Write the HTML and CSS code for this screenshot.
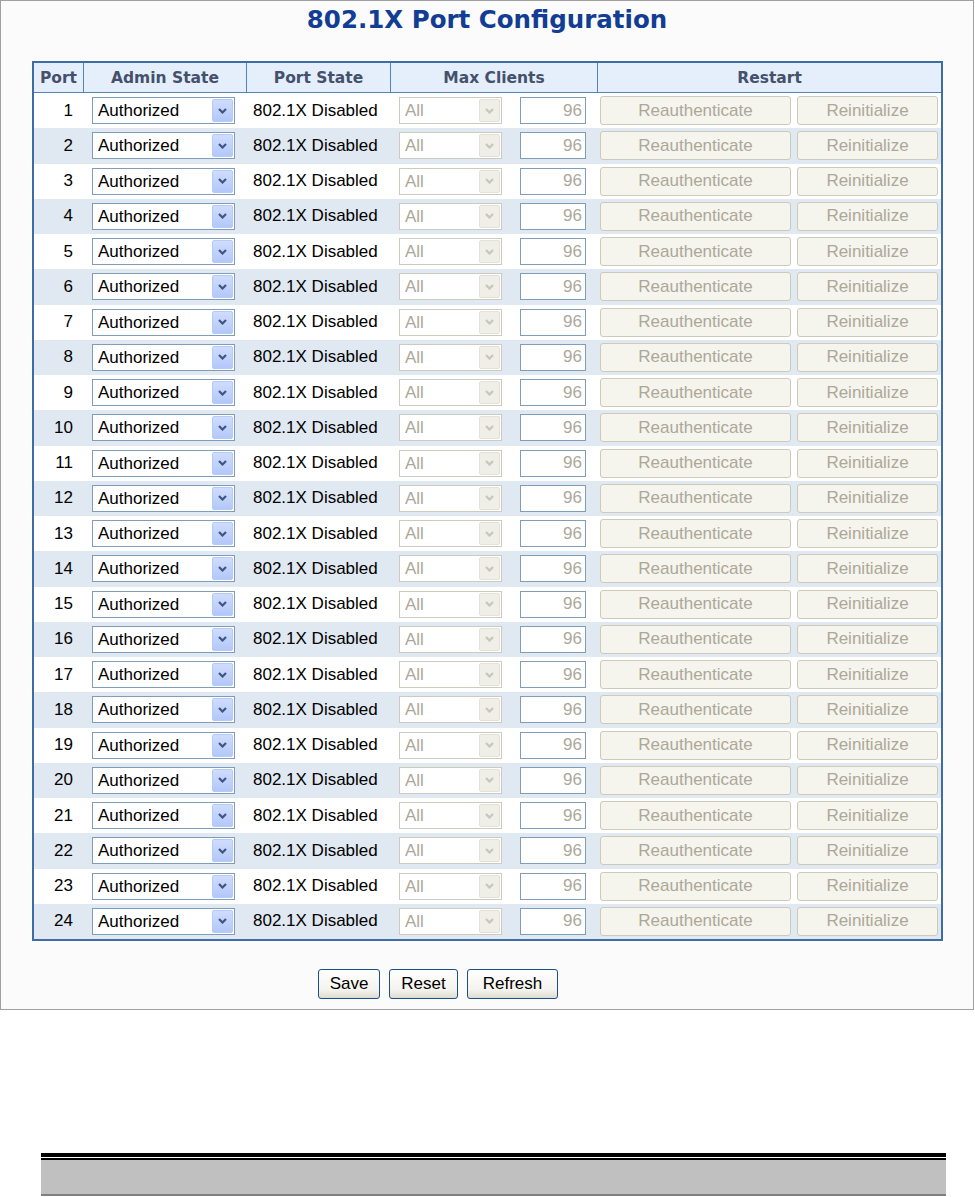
FILE: index.html
```html
<!DOCTYPE html>
<html lang="en">
<head>
<meta charset="utf-8">
<title>802.1X Port Configuration</title>
<link rel="stylesheet" href="styles.css">
</head>
<body>
<div class="frame">
  <h1 class="title">802.1X Port Configuration</h1>
  <table class="cfg">
    <colgroup>
      <col class="w-port"><col class="w-admin"><col class="w-state"><col class="w-maxsel"><col class="w-maxin"><col class="w-reauth"><col class="w-reinit">
    </colgroup>
    <thead>
      <tr><th>Port</th><th>Admin State</th><th>Port State</th><th colspan="2">Max Clients</th><th colspan="2">Restart</th></tr>
    </thead>
    <tbody>
      <tr><td class="c-port">1</td><td class="c-admin"><span class="sel"><select><option>Authorized</option><option>Unauthorized</option><option>Port-based 802.1X</option></select><span class="sel-btn"><svg width="9" height="6" viewBox="0 0 9 6"><path d="M1 1 L4.5 4.5 L8 1" class="chev"/></svg></span></span></td><td class="c-state">802.1X Disabled</td><td class="c-maxsel"><span class="sel sel-dis"><select disabled><option>All</option></select><span class="sel-btn"><svg width="9" height="6" viewBox="0 0 9 6"><path d="M1 1 L4.5 4.5 L8 1" class="chev"/></svg></span></span></td><td class="c-maxin"><input class="num" type="text" value="96" disabled></td><td class="c-reauth"><button class="btn-dis reauth" disabled>Reauthenticate</button></td><td class="c-reinit"><button class="btn-dis reinit" disabled>Reinitialize</button></td></tr>
      <tr><td class="c-port">2</td><td class="c-admin"><span class="sel"><select><option>Authorized</option><option>Unauthorized</option><option>Port-based 802.1X</option></select><span class="sel-btn"><svg width="9" height="6" viewBox="0 0 9 6"><path d="M1 1 L4.5 4.5 L8 1" class="chev"/></svg></span></span></td><td class="c-state">802.1X Disabled</td><td class="c-maxsel"><span class="sel sel-dis"><select disabled><option>All</option></select><span class="sel-btn"><svg width="9" height="6" viewBox="0 0 9 6"><path d="M1 1 L4.5 4.5 L8 1" class="chev"/></svg></span></span></td><td class="c-maxin"><input class="num" type="text" value="96" disabled></td><td class="c-reauth"><button class="btn-dis reauth" disabled>Reauthenticate</button></td><td class="c-reinit"><button class="btn-dis reinit" disabled>Reinitialize</button></td></tr>
      <tr><td class="c-port">3</td><td class="c-admin"><span class="sel"><select><option>Authorized</option><option>Unauthorized</option><option>Port-based 802.1X</option></select><span class="sel-btn"><svg width="9" height="6" viewBox="0 0 9 6"><path d="M1 1 L4.5 4.5 L8 1" class="chev"/></svg></span></span></td><td class="c-state">802.1X Disabled</td><td class="c-maxsel"><span class="sel sel-dis"><select disabled><option>All</option></select><span class="sel-btn"><svg width="9" height="6" viewBox="0 0 9 6"><path d="M1 1 L4.5 4.5 L8 1" class="chev"/></svg></span></span></td><td class="c-maxin"><input class="num" type="text" value="96" disabled></td><td class="c-reauth"><button class="btn-dis reauth" disabled>Reauthenticate</button></td><td class="c-reinit"><button class="btn-dis reinit" disabled>Reinitialize</button></td></tr>
      <tr><td class="c-port">4</td><td class="c-admin"><span class="sel"><select><option>Authorized</option><option>Unauthorized</option><option>Port-based 802.1X</option></select><span class="sel-btn"><svg width="9" height="6" viewBox="0 0 9 6"><path d="M1 1 L4.5 4.5 L8 1" class="chev"/></svg></span></span></td><td class="c-state">802.1X Disabled</td><td class="c-maxsel"><span class="sel sel-dis"><select disabled><option>All</option></select><span class="sel-btn"><svg width="9" height="6" viewBox="0 0 9 6"><path d="M1 1 L4.5 4.5 L8 1" class="chev"/></svg></span></span></td><td class="c-maxin"><input class="num" type="text" value="96" disabled></td><td class="c-reauth"><button class="btn-dis reauth" disabled>Reauthenticate</button></td><td class="c-reinit"><button class="btn-dis reinit" disabled>Reinitialize</button></td></tr>
      <tr><td class="c-port">5</td><td class="c-admin"><span class="sel"><select><option>Authorized</option><option>Unauthorized</option><option>Port-based 802.1X</option></select><span class="sel-btn"><svg width="9" height="6" viewBox="0 0 9 6"><path d="M1 1 L4.5 4.5 L8 1" class="chev"/></svg></span></span></td><td class="c-state">802.1X Disabled</td><td class="c-maxsel"><span class="sel sel-dis"><select disabled><option>All</option></select><span class="sel-btn"><svg width="9" height="6" viewBox="0 0 9 6"><path d="M1 1 L4.5 4.5 L8 1" class="chev"/></svg></span></span></td><td class="c-maxin"><input class="num" type="text" value="96" disabled></td><td class="c-reauth"><button class="btn-dis reauth" disabled>Reauthenticate</button></td><td class="c-reinit"><button class="btn-dis reinit" disabled>Reinitialize</button></td></tr>
      <tr><td class="c-port">6</td><td class="c-admin"><span class="sel"><select><option>Authorized</option><option>Unauthorized</option><option>Port-based 802.1X</option></select><span class="sel-btn"><svg width="9" height="6" viewBox="0 0 9 6"><path d="M1 1 L4.5 4.5 L8 1" class="chev"/></svg></span></span></td><td class="c-state">802.1X Disabled</td><td class="c-maxsel"><span class="sel sel-dis"><select disabled><option>All</option></select><span class="sel-btn"><svg width="9" height="6" viewBox="0 0 9 6"><path d="M1 1 L4.5 4.5 L8 1" class="chev"/></svg></span></span></td><td class="c-maxin"><input class="num" type="text" value="96" disabled></td><td class="c-reauth"><button class="btn-dis reauth" disabled>Reauthenticate</button></td><td class="c-reinit"><button class="btn-dis reinit" disabled>Reinitialize</button></td></tr>
      <tr><td class="c-port">7</td><td class="c-admin"><span class="sel"><select><option>Authorized</option><option>Unauthorized</option><option>Port-based 802.1X</option></select><span class="sel-btn"><svg width="9" height="6" viewBox="0 0 9 6"><path d="M1 1 L4.5 4.5 L8 1" class="chev"/></svg></span></span></td><td class="c-state">802.1X Disabled</td><td class="c-maxsel"><span class="sel sel-dis"><select disabled><option>All</option></select><span class="sel-btn"><svg width="9" height="6" viewBox="0 0 9 6"><path d="M1 1 L4.5 4.5 L8 1" class="chev"/></svg></span></span></td><td class="c-maxin"><input class="num" type="text" value="96" disabled></td><td class="c-reauth"><button class="btn-dis reauth" disabled>Reauthenticate</button></td><td class="c-reinit"><button class="btn-dis reinit" disabled>Reinitialize</button></td></tr>
      <tr><td class="c-port">8</td><td class="c-admin"><span class="sel"><select><option>Authorized</option><option>Unauthorized</option><option>Port-based 802.1X</option></select><span class="sel-btn"><svg width="9" height="6" viewBox="0 0 9 6"><path d="M1 1 L4.5 4.5 L8 1" class="chev"/></svg></span></span></td><td class="c-state">802.1X Disabled</td><td class="c-maxsel"><span class="sel sel-dis"><select disabled><option>All</option></select><span class="sel-btn"><svg width="9" height="6" viewBox="0 0 9 6"><path d="M1 1 L4.5 4.5 L8 1" class="chev"/></svg></span></span></td><td class="c-maxin"><input class="num" type="text" value="96" disabled></td><td class="c-reauth"><button class="btn-dis reauth" disabled>Reauthenticate</button></td><td class="c-reinit"><button class="btn-dis reinit" disabled>Reinitialize</button></td></tr>
      <tr><td class="c-port">9</td><td class="c-admin"><span class="sel"><select><option>Authorized</option><option>Unauthorized</option><option>Port-based 802.1X</option></select><span class="sel-btn"><svg width="9" height="6" viewBox="0 0 9 6"><path d="M1 1 L4.5 4.5 L8 1" class="chev"/></svg></span></span></td><td class="c-state">802.1X Disabled</td><td class="c-maxsel"><span class="sel sel-dis"><select disabled><option>All</option></select><span class="sel-btn"><svg width="9" height="6" viewBox="0 0 9 6"><path d="M1 1 L4.5 4.5 L8 1" class="chev"/></svg></span></span></td><td class="c-maxin"><input class="num" type="text" value="96" disabled></td><td class="c-reauth"><button class="btn-dis reauth" disabled>Reauthenticate</button></td><td class="c-reinit"><button class="btn-dis reinit" disabled>Reinitialize</button></td></tr>
      <tr><td class="c-port">10</td><td class="c-admin"><span class="sel"><select><option>Authorized</option><option>Unauthorized</option><option>Port-based 802.1X</option></select><span class="sel-btn"><svg width="9" height="6" viewBox="0 0 9 6"><path d="M1 1 L4.5 4.5 L8 1" class="chev"/></svg></span></span></td><td class="c-state">802.1X Disabled</td><td class="c-maxsel"><span class="sel sel-dis"><select disabled><option>All</option></select><span class="sel-btn"><svg width="9" height="6" viewBox="0 0 9 6"><path d="M1 1 L4.5 4.5 L8 1" class="chev"/></svg></span></span></td><td class="c-maxin"><input class="num" type="text" value="96" disabled></td><td class="c-reauth"><button class="btn-dis reauth" disabled>Reauthenticate</button></td><td class="c-reinit"><button class="btn-dis reinit" disabled>Reinitialize</button></td></tr>
      <tr><td class="c-port">11</td><td class="c-admin"><span class="sel"><select><option>Authorized</option><option>Unauthorized</option><option>Port-based 802.1X</option></select><span class="sel-btn"><svg width="9" height="6" viewBox="0 0 9 6"><path d="M1 1 L4.5 4.5 L8 1" class="chev"/></svg></span></span></td><td class="c-state">802.1X Disabled</td><td class="c-maxsel"><span class="sel sel-dis"><select disabled><option>All</option></select><span class="sel-btn"><svg width="9" height="6" viewBox="0 0 9 6"><path d="M1 1 L4.5 4.5 L8 1" class="chev"/></svg></span></span></td><td class="c-maxin"><input class="num" type="text" value="96" disabled></td><td class="c-reauth"><button class="btn-dis reauth" disabled>Reauthenticate</button></td><td class="c-reinit"><button class="btn-dis reinit" disabled>Reinitialize</button></td></tr>
      <tr><td class="c-port">12</td><td class="c-admin"><span class="sel"><select><option>Authorized</option><option>Unauthorized</option><option>Port-based 802.1X</option></select><span class="sel-btn"><svg width="9" height="6" viewBox="0 0 9 6"><path d="M1 1 L4.5 4.5 L8 1" class="chev"/></svg></span></span></td><td class="c-state">802.1X Disabled</td><td class="c-maxsel"><span class="sel sel-dis"><select disabled><option>All</option></select><span class="sel-btn"><svg width="9" height="6" viewBox="0 0 9 6"><path d="M1 1 L4.5 4.5 L8 1" class="chev"/></svg></span></span></td><td class="c-maxin"><input class="num" type="text" value="96" disabled></td><td class="c-reauth"><button class="btn-dis reauth" disabled>Reauthenticate</button></td><td class="c-reinit"><button class="btn-dis reinit" disabled>Reinitialize</button></td></tr>
      <tr><td class="c-port">13</td><td class="c-admin"><span class="sel"><select><option>Authorized</option><option>Unauthorized</option><option>Port-based 802.1X</option></select><span class="sel-btn"><svg width="9" height="6" viewBox="0 0 9 6"><path d="M1 1 L4.5 4.5 L8 1" class="chev"/></svg></span></span></td><td class="c-state">802.1X Disabled</td><td class="c-maxsel"><span class="sel sel-dis"><select disabled><option>All</option></select><span class="sel-btn"><svg width="9" height="6" viewBox="0 0 9 6"><path d="M1 1 L4.5 4.5 L8 1" class="chev"/></svg></span></span></td><td class="c-maxin"><input class="num" type="text" value="96" disabled></td><td class="c-reauth"><button class="btn-dis reauth" disabled>Reauthenticate</button></td><td class="c-reinit"><button class="btn-dis reinit" disabled>Reinitialize</button></td></tr>
      <tr><td class="c-port">14</td><td class="c-admin"><span class="sel"><select><option>Authorized</option><option>Unauthorized</option><option>Port-based 802.1X</option></select><span class="sel-btn"><svg width="9" height="6" viewBox="0 0 9 6"><path d="M1 1 L4.5 4.5 L8 1" class="chev"/></svg></span></span></td><td class="c-state">802.1X Disabled</td><td class="c-maxsel"><span class="sel sel-dis"><select disabled><option>All</option></select><span class="sel-btn"><svg width="9" height="6" viewBox="0 0 9 6"><path d="M1 1 L4.5 4.5 L8 1" class="chev"/></svg></span></span></td><td class="c-maxin"><input class="num" type="text" value="96" disabled></td><td class="c-reauth"><button class="btn-dis reauth" disabled>Reauthenticate</button></td><td class="c-reinit"><button class="btn-dis reinit" disabled>Reinitialize</button></td></tr>
      <tr><td class="c-port">15</td><td class="c-admin"><span class="sel"><select><option>Authorized</option><option>Unauthorized</option><option>Port-based 802.1X</option></select><span class="sel-btn"><svg width="9" height="6" viewBox="0 0 9 6"><path d="M1 1 L4.5 4.5 L8 1" class="chev"/></svg></span></span></td><td class="c-state">802.1X Disabled</td><td class="c-maxsel"><span class="sel sel-dis"><select disabled><option>All</option></select><span class="sel-btn"><svg width="9" height="6" viewBox="0 0 9 6"><path d="M1 1 L4.5 4.5 L8 1" class="chev"/></svg></span></span></td><td class="c-maxin"><input class="num" type="text" value="96" disabled></td><td class="c-reauth"><button class="btn-dis reauth" disabled>Reauthenticate</button></td><td class="c-reinit"><button class="btn-dis reinit" disabled>Reinitialize</button></td></tr>
      <tr><td class="c-port">16</td><td class="c-admin"><span class="sel"><select><option>Authorized</option><option>Unauthorized</option><option>Port-based 802.1X</option></select><span class="sel-btn"><svg width="9" height="6" viewBox="0 0 9 6"><path d="M1 1 L4.5 4.5 L8 1" class="chev"/></svg></span></span></td><td class="c-state">802.1X Disabled</td><td class="c-maxsel"><span class="sel sel-dis"><select disabled><option>All</option></select><span class="sel-btn"><svg width="9" height="6" viewBox="0 0 9 6"><path d="M1 1 L4.5 4.5 L8 1" class="chev"/></svg></span></span></td><td class="c-maxin"><input class="num" type="text" value="96" disabled></td><td class="c-reauth"><button class="btn-dis reauth" disabled>Reauthenticate</button></td><td class="c-reinit"><button class="btn-dis reinit" disabled>Reinitialize</button></td></tr>
      <tr><td class="c-port">17</td><td class="c-admin"><span class="sel"><select><option>Authorized</option><option>Unauthorized</option><option>Port-based 802.1X</option></select><span class="sel-btn"><svg width="9" height="6" viewBox="0 0 9 6"><path d="M1 1 L4.5 4.5 L8 1" class="chev"/></svg></span></span></td><td class="c-state">802.1X Disabled</td><td class="c-maxsel"><span class="sel sel-dis"><select disabled><option>All</option></select><span class="sel-btn"><svg width="9" height="6" viewBox="0 0 9 6"><path d="M1 1 L4.5 4.5 L8 1" class="chev"/></svg></span></span></td><td class="c-maxin"><input class="num" type="text" value="96" disabled></td><td class="c-reauth"><button class="btn-dis reauth" disabled>Reauthenticate</button></td><td class="c-reinit"><button class="btn-dis reinit" disabled>Reinitialize</button></td></tr>
      <tr><td class="c-port">18</td><td class="c-admin"><span class="sel"><select><option>Authorized</option><option>Unauthorized</option><option>Port-based 802.1X</option></select><span class="sel-btn"><svg width="9" height="6" viewBox="0 0 9 6"><path d="M1 1 L4.5 4.5 L8 1" class="chev"/></svg></span></span></td><td class="c-state">802.1X Disabled</td><td class="c-maxsel"><span class="sel sel-dis"><select disabled><option>All</option></select><span class="sel-btn"><svg width="9" height="6" viewBox="0 0 9 6"><path d="M1 1 L4.5 4.5 L8 1" class="chev"/></svg></span></span></td><td class="c-maxin"><input class="num" type="text" value="96" disabled></td><td class="c-reauth"><button class="btn-dis reauth" disabled>Reauthenticate</button></td><td class="c-reinit"><button class="btn-dis reinit" disabled>Reinitialize</button></td></tr>
      <tr><td class="c-port">19</td><td class="c-admin"><span class="sel"><select><option>Authorized</option><option>Unauthorized</option><option>Port-based 802.1X</option></select><span class="sel-btn"><svg width="9" height="6" viewBox="0 0 9 6"><path d="M1 1 L4.5 4.5 L8 1" class="chev"/></svg></span></span></td><td class="c-state">802.1X Disabled</td><td class="c-maxsel"><span class="sel sel-dis"><select disabled><option>All</option></select><span class="sel-btn"><svg width="9" height="6" viewBox="0 0 9 6"><path d="M1 1 L4.5 4.5 L8 1" class="chev"/></svg></span></span></td><td class="c-maxin"><input class="num" type="text" value="96" disabled></td><td class="c-reauth"><button class="btn-dis reauth" disabled>Reauthenticate</button></td><td class="c-reinit"><button class="btn-dis reinit" disabled>Reinitialize</button></td></tr>
      <tr><td class="c-port">20</td><td class="c-admin"><span class="sel"><select><option>Authorized</option><option>Unauthorized</option><option>Port-based 802.1X</option></select><span class="sel-btn"><svg width="9" height="6" viewBox="0 0 9 6"><path d="M1 1 L4.5 4.5 L8 1" class="chev"/></svg></span></span></td><td class="c-state">802.1X Disabled</td><td class="c-maxsel"><span class="sel sel-dis"><select disabled><option>All</option></select><span class="sel-btn"><svg width="9" height="6" viewBox="0 0 9 6"><path d="M1 1 L4.5 4.5 L8 1" class="chev"/></svg></span></span></td><td class="c-maxin"><input class="num" type="text" value="96" disabled></td><td class="c-reauth"><button class="btn-dis reauth" disabled>Reauthenticate</button></td><td class="c-reinit"><button class="btn-dis reinit" disabled>Reinitialize</button></td></tr>
      <tr><td class="c-port">21</td><td class="c-admin"><span class="sel"><select><option>Authorized</option><option>Unauthorized</option><option>Port-based 802.1X</option></select><span class="sel-btn"><svg width="9" height="6" viewBox="0 0 9 6"><path d="M1 1 L4.5 4.5 L8 1" class="chev"/></svg></span></span></td><td class="c-state">802.1X Disabled</td><td class="c-maxsel"><span class="sel sel-dis"><select disabled><option>All</option></select><span class="sel-btn"><svg width="9" height="6" viewBox="0 0 9 6"><path d="M1 1 L4.5 4.5 L8 1" class="chev"/></svg></span></span></td><td class="c-maxin"><input class="num" type="text" value="96" disabled></td><td class="c-reauth"><button class="btn-dis reauth" disabled>Reauthenticate</button></td><td class="c-reinit"><button class="btn-dis reinit" disabled>Reinitialize</button></td></tr>
      <tr><td class="c-port">22</td><td class="c-admin"><span class="sel"><select><option>Authorized</option><option>Unauthorized</option><option>Port-based 802.1X</option></select><span class="sel-btn"><svg width="9" height="6" viewBox="0 0 9 6"><path d="M1 1 L4.5 4.5 L8 1" class="chev"/></svg></span></span></td><td class="c-state">802.1X Disabled</td><td class="c-maxsel"><span class="sel sel-dis"><select disabled><option>All</option></select><span class="sel-btn"><svg width="9" height="6" viewBox="0 0 9 6"><path d="M1 1 L4.5 4.5 L8 1" class="chev"/></svg></span></span></td><td class="c-maxin"><input class="num" type="text" value="96" disabled></td><td class="c-reauth"><button class="btn-dis reauth" disabled>Reauthenticate</button></td><td class="c-reinit"><button class="btn-dis reinit" disabled>Reinitialize</button></td></tr>
      <tr><td class="c-port">23</td><td class="c-admin"><span class="sel"><select><option>Authorized</option><option>Unauthorized</option><option>Port-based 802.1X</option></select><span class="sel-btn"><svg width="9" height="6" viewBox="0 0 9 6"><path d="M1 1 L4.5 4.5 L8 1" class="chev"/></svg></span></span></td><td class="c-state">802.1X Disabled</td><td class="c-maxsel"><span class="sel sel-dis"><select disabled><option>All</option></select><span class="sel-btn"><svg width="9" height="6" viewBox="0 0 9 6"><path d="M1 1 L4.5 4.5 L8 1" class="chev"/></svg></span></span></td><td class="c-maxin"><input class="num" type="text" value="96" disabled></td><td class="c-reauth"><button class="btn-dis reauth" disabled>Reauthenticate</button></td><td class="c-reinit"><button class="btn-dis reinit" disabled>Reinitialize</button></td></tr>
      <tr><td class="c-port">24</td><td class="c-admin"><span class="sel"><select><option>Authorized</option><option>Unauthorized</option><option>Port-based 802.1X</option></select><span class="sel-btn"><svg width="9" height="6" viewBox="0 0 9 6"><path d="M1 1 L4.5 4.5 L8 1" class="chev"/></svg></span></span></td><td class="c-state">802.1X Disabled</td><td class="c-maxsel"><span class="sel sel-dis"><select disabled><option>All</option></select><span class="sel-btn"><svg width="9" height="6" viewBox="0 0 9 6"><path d="M1 1 L4.5 4.5 L8 1" class="chev"/></svg></span></span></td><td class="c-maxin"><input class="num" type="text" value="96" disabled></td><td class="c-reauth"><button class="btn-dis reauth" disabled>Reauthenticate</button></td><td class="c-reinit"><button class="btn-dis reinit" disabled>Reinitialize</button></td></tr>
    </tbody>
  </table>
  <div class="actions">
    <button class="btn btn-save" type="button">Save</button>
    <button class="btn btn-reset" type="reset">Reset</button>
    <button class="btn btn-refresh" type="button">Refresh</button>
  </div>
</div>
<div class="footer-bar"><div class="footer-inner"></div></div>
</body>
</html>
```
FILE: styles.css
```css
html, body {
  margin: 0;
  padding: 0;
  background: #ffffff;
}

.frame {
  box-sizing: border-box;
  width: 974px;
  height: 1010px;
  border: 1px solid #a0a0a0;
  background: #fbfbfb;
  padding-top: 5px;
}

.title {
  margin: 0;
  text-align: center;
  font: bold 24.5px/28px "DejaVu Sans", Verdana, sans-serif;
  color: #123d94;
}

.cfg {
  margin: 27px 0 0 31px;
  width: 911px;
  table-layout: fixed;
  border-collapse: separate;
  border-spacing: 0;
  border: 2px solid #3e6da6;
  background: #ffffff;
}

.w-port { width: 50px; }
.w-admin { width: 163px; }
.w-state { width: 144px; }
.w-maxsel { width: 122px; }
.w-maxin { width: 85px; }
.w-reauth { width: 197px; }
.w-reinit { width: 146px; }

.cfg th {
  height: 29px;
  padding: 0;
  background: #e4effb;
  border-bottom: 1px solid #5782b5;
  border-right: 1px solid #5782b5;
  font: bold 15.5px "DejaVu Sans", Verdana, sans-serif;
  color: #45516c;
  text-align: center;
  vertical-align: middle;
}

.cfg th:last-child {
  border-right: 0;
}

.cfg tbody tr {
  height: 35.25px;
}

.cfg tbody tr:nth-child(even) {
  background: #e0e8f1;
}

.cfg td {
  padding: 0;
  vertical-align: middle;
  font: 17px "Liberation Sans", Arial, sans-serif;
  color: #000000;
  white-space: nowrap;
}

.cfg td.c-port {
  text-align: right;
  padding-right: 11px;
}

.cfg td.c-admin { padding-left: 8px; }
.cfg td.c-state { padding-left: 6px; }
.cfg td.c-maxsel { padding-left: 8px; }
.cfg td.c-maxin { padding-left: 7px; }
.cfg td.c-reauth { padding-left: 2px; }
.cfg td.c-reinit { padding-left: 2px; }

.sel {
  position: relative;
  display: inline-block;
  vertical-align: middle;
}

.sel select {
  -webkit-appearance: none;
  appearance: none;
  display: block;
  box-sizing: border-box;
  width: 143px;
  height: 27px;
  margin: 0;
  padding: 0 0 0 5px;
  border: 1px solid #7f9db9;
  border-radius: 0;
  background: #ffffff;
  font: 17px "Liberation Sans", Arial, sans-serif;
  color: #000000;
  opacity: 1;
}

.sel-btn {
  position: absolute;
  top: 2px;
  right: 2px;
  bottom: 2px;
  width: 21px;
  box-sizing: border-box;
  border: 1px solid #b6cafa;
  border-radius: 2px;
  background: linear-gradient(#cfdcfe, #b3c8f9);
  display: flex;
  align-items: center;
  justify-content: center;
  pointer-events: none;
}

.chev {
  fill: none;
  stroke: #3f5585;
  stroke-width: 2.2;
}

.sel-dis select {
  width: 103px;
  border-color: #cdcbbe;
  color: #aca899;
  background: #ffffff;
}

.sel-dis .sel-btn {
  border-color: #e4e2d8;
  background: #efeee7;
}

.sel-dis .chev {
  stroke: #c8c6b9;
}

.num {
  box-sizing: border-box;
  width: 66px;
  height: 27px;
  margin: 0;
  padding: 0 3px 0 0;
  border: 1px solid #7f9db9;
  background: #ffffff;
  color: #aca899;
  -webkit-text-fill-color: #aca899;
  text-align: right;
  font: 17px "Liberation Sans", Arial, sans-serif;
  vertical-align: middle;
  opacity: 1;
}

.btn-dis {
  box-sizing: border-box;
  height: 29px;
  margin: 0;
  padding: 0;
  border: 1px solid #cdcab9;
  border-radius: 3px;
  background: #f5f4ed;
  color: #aca899;
  font: 17px "Liberation Sans", Arial, sans-serif;
  vertical-align: middle;
}

.reauth { width: 191px; }
.reinit { width: 141px; }

.actions {
  display: flex;
  gap: 9px;
  margin-top: 28px;
  padding-left: 317px;
}

.btn {
  box-sizing: border-box;
  height: 30px;
  margin: 0;
  padding: 0;
  border: 1px solid #1c4f8a;
  border-radius: 3px;
  background: linear-gradient(#ffffff, #f4f3ee 70%, #dedcd2);
  color: #000000;
  font: 17px "Liberation Sans", Arial, sans-serif;
}

.btn-save { width: 62px; }
.btn-reset { width: 69px; }
.btn-refresh { width: 91px; }

.footer-bar {
  margin: 143px 0 0 41px;
  width: 905px;
  border-top: 4px solid #000000;
  padding-top: 1px;
}

.footer-inner {
  height: 34px;
  border-top: 2px solid #000000;
  border-bottom: 2px solid #808080;
  background: #c0c0c0;
}
```
